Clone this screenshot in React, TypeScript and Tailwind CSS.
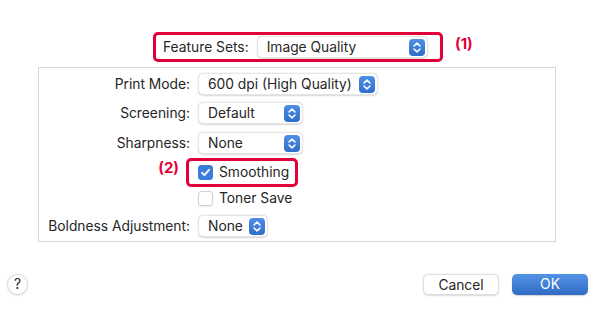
import React from 'react';

const font = { fontFamily: 'Inter, "Liberation Sans", sans-serif' };

const Stepper = () => (
  <svg width="16" height="17" viewBox="0 0 16 17" className="shrink-0">
    <defs>
      <linearGradient id="stp" x1="0" y1="0" x2="0" y2="1">
        <stop offset="0" stopColor="#4f8fe6" />
        <stop offset="1" stopColor="#2f6dcc" />
      </linearGradient>
    </defs>
    <rect x="0" y="0" width="16" height="17" rx="4" fill="url(#stp)" />
    <path d="M5 7 L8 4.2 L11 7" stroke="#fff" strokeWidth="1.6" fill="none" strokeLinecap="round" strokeLinejoin="round" />
    <path d="M5 10 L8 12.8 L11 10" stroke="#fff" strokeWidth="1.6" fill="none" strokeLinecap="round" strokeLinejoin="round" />
  </svg>
);

const Popup: React.FC<{ value: string; width: string }> = ({ value, width }) => (
  <div
    className={`flex items-center justify-between h-[22px] pl-[9px] pr-[2px] bg-white rounded-[5px] border border-[#e6e6e6] shadow-[0_0.5px_1.5px_rgba(0,0,0,0.16)] ${width}`}
  >
    <span className="text-[13.8px] text-[#262626] leading-[22px]">{value}</span>
    <Stepper />
  </div>
);

const Checkbox: React.FC<{ checked?: boolean }> = ({ checked }) =>
  checked ? (
    <div className="w-[15px] h-[15px] rounded-[3.5px] bg-[#3b7ddd] flex items-center justify-center">
      <svg width="11" height="11" viewBox="0 0 11 11">
        <path d="M2 5.8 L4.4 8.2 L9 2.8" stroke="#fff" strokeWidth="1.8" fill="none" strokeLinecap="round" strokeLinejoin="round" />
      </svg>
    </div>
  ) : (
    <div className="w-[15px] h-[15px] rounded-[3.5px] bg-white border border-[#cfcfcf] shadow-[0_0.5px_1px_rgba(0,0,0,0.08)]" />
  );

const Label: React.FC<{ children: React.ReactNode }> = ({ children }) => (
  <div className="flex items-center justify-end h-[22px] text-[13.8px] text-[#262626]">{children}</div>
);

export default function App() {
  return (
    <div className="w-[600px] h-[318px] bg-white flex flex-col" style={font}>
      <div className="flex items-start mt-[32px] ml-[153px]">
        <div className="flex items-center h-[30px] w-[290px] border-[3px] border-[#e2003b] rounded-[5px] pl-[7px]">
          <span className="text-[13.8px] text-[#262626] mr-[8px]">Feature Sets:</span>
          <Popup value="Image Quality" width="w-[171px]" />
        </div>
        <span className="ml-[12px] mt-[1px] text-[15px] font-bold text-[#e2003b]">(1)</span>
      </div>

      <div className="ml-[38px] mt-[5px] w-[518px] h-[175px] border border-[#d6d6d6] bg-white pt-[5px]">
        <div className="grid grid-cols-[151px_1fr] gap-x-[8px]">
          <Label>Print Mode:</Label>
          <Popup value="600 dpi (High Quality)" width="w-[180px]" />

          <div className="col-span-2 h-[7px]" />
          <Label>Screening:</Label>
          <Popup value="Default" width="w-[105px]" />

          <div className="col-span-2 h-[8px]" />
          <Label>Sharpness:</Label>
          <Popup value="None" width="w-[105px]" />

          <div className="col-span-2 h-[7px]" />
          <div className="flex justify-end items-start h-[22px] pr-[11px]">
            <span className="text-[15px] font-bold text-[#e2003b] -mt-[4px]">(2)</span>
          </div>
          <div className="relative flex items-center h-[22px] gap-[6px]">
            <div className="absolute left-[-12px] top-[-3px] w-[112px] h-[29px] border-[3px] border-[#e2003b] rounded-[5px]" />
            <Checkbox checked />
            <span className="text-[13.8px] text-[#262626]">Smoothing</span>
          </div>

          <div className="col-span-2 h-[4px]" />
          <div />
          <div className="flex items-center h-[22px] gap-[6px]">
            <Checkbox />
            <span className="text-[13.8px] text-[#262626]">Toner Save</span>
          </div>

          <div className="col-span-2 h-[6px]" />
          <Label>Boldness Adjustment:</Label>
          <Popup value="None" width="w-[70px]" />
        </div>
      </div>

      <div className="flex items-center mt-[32px] pl-[7px] pr-[12px]">
        <div className="w-[21px] h-[21px] rounded-full bg-white border border-[#dcdcdc] shadow-[0_0.5px_1.5px_rgba(0,0,0,0.15)] flex items-center justify-center text-[13.8px] text-[#262626]">
          ?
        </div>
        <div className="flex-1" />
        <button className="w-[76px] h-[21px] rounded-[5px] bg-white border border-[#dedede] shadow-[0_0.5px_1.5px_rgba(0,0,0,0.15)] text-[13.8px] text-[#262626]">
          Cancel
        </button>
        <button className="ml-[13px] w-[76px] h-[21px] rounded-[5px] bg-gradient-to-b from-[#5393e4] to-[#2f6bc4] text-[13.8px] text-white shadow-[0_0.5px_1.5px_rgba(0,0,0,0.2)]">
          OK
        </button>
      </div>
    </div>
  );
}
